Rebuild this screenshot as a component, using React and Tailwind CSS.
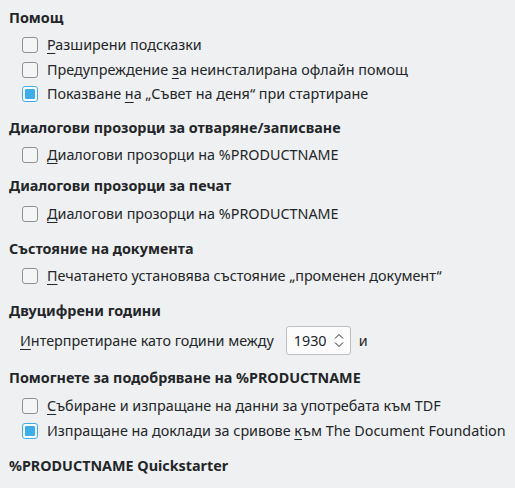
import { useState } from 'react';

// at: the fragment of the label whose first letter is the mnemonic
function CheckRow({ label, at, checked }) {
    const [on, setOn] = useState(checked);
    const i = label.indexOf(at);
    return (
        <label className="flex h-[24.5px] items-center pl-[22px] cursor-default" onClick={() => setOn(!on)}>
            <span
                className={
                    'flex h-4 w-4 shrink-0 items-center justify-center rounded-[3px] border ' +
                    (on ? 'border-[#3daee9] bg-[#fcfcfc]' : 'border-[#8f9193] bg-[#f4f5f5]')
                }
            >
                {on && <span className="h-[10px] w-[10px] rounded-[1px] bg-[#3daee9]" />}
            </span>
            <span className="ml-[9px] whitespace-nowrap">
                {label.slice(0, i)}
                <span className="underline underline-offset-[3px]">{label[i]}</span>
                {label.slice(i + 1)}
            </span>
        </label>
    );
}

function Heading({ children, className }) {
    return <div className={'h-5 pl-[9px] font-bold leading-5 ' + className}>{children}</div>;
}

export default function App() {
    const [year, setYear] = useState(1930);

    return (
        <div
            className="h-[488px] w-[515px] overflow-hidden bg-[#eff0f1] pt-2 text-[14.35px] text-[#232629]"
            style={{ fontFamily: '"Noto Sans", sans-serif' }}
        >
            <Heading className="">Помощ</Heading>
            <div className="mt-[5px]">
                <CheckRow label="Разширени подсказки" at="Р" />
                <CheckRow label="Предупреждение за неинсталирана офлайн помощ" at="за " />
                <CheckRow label="Показване на „Съвет на деня“ при стартиране" at="на „" checked />
            </div>

            <Heading className="mt-[11px]">Диалогови прозорци за отваряне/записване</Heading>
            <div className="mt-[5px]">
                <CheckRow label="Диалогови прозорци на %PRODUCTNAME" at="Д" />
            </div>

            <Heading className="mt-[9px]">Диалогови прозорци за печат</Heading>
            <div className="mt-[6px]">
                <CheckRow label="Диалогови прозорци на %PRODUCTNAME" at="Д" />
            </div>

            <Heading className="mt-3">Състояние на документа</Heading>
            <div className="mt-[5px]">
                <CheckRow label="Печатането установява състояние „променен документ“" at="П" />
            </div>

            <Heading className="mt-[13px]">Двуцифрени години</Heading>
            <div className="mt-[5px] flex items-center pl-5">
                <span className="whitespace-nowrap">
                    <span className="underline underline-offset-[3px]">И</span>нтерпретиране като години между
                </span>
                <div className="ml-[12px] flex h-[29px] w-[65px] items-center rounded-[3px] border border-[#bcbebf] bg-[#fcfcfc] pl-[7px] pr-[6px]">
                    <span className="flex-1">{year}</span>
                    <div className="flex flex-col items-center gap-[3px]">
                        <svg width="10" height="6" viewBox="0 0 10 6" onClick={() => setYear(year + 1)}>
                            <path d="M1 5.5 L5 1.5 L9 5.5" fill="none" stroke="#232629" strokeWidth="1" />
                        </svg>
                        <svg width="10" height="6" viewBox="0 0 10 6" onClick={() => setYear(year - 1)}>
                            <path d="M1 0.5 L5 4.5 L9 0.5" fill="none" stroke="#232629" strokeWidth="1" />
                        </svg>
                    </div>
                </div>
                <span className="ml-[8px]">и</span>
            </div>

            <Heading className="mt-[13px]">Помогнете за подобряване на %PRODUCTNAME</Heading>
            <div className="mt-[6px]">
                <CheckRow label="Събиране и изпращане на данни за употребата към TDF" at="С" />
                <CheckRow label="Изпращане на доклади за сривове към The Document Foundation" at="към" checked />
            </div>

            <Heading className="mt-[13px]">%PRODUCTNAME Quickstarter</Heading>
        </div>
    );
}
